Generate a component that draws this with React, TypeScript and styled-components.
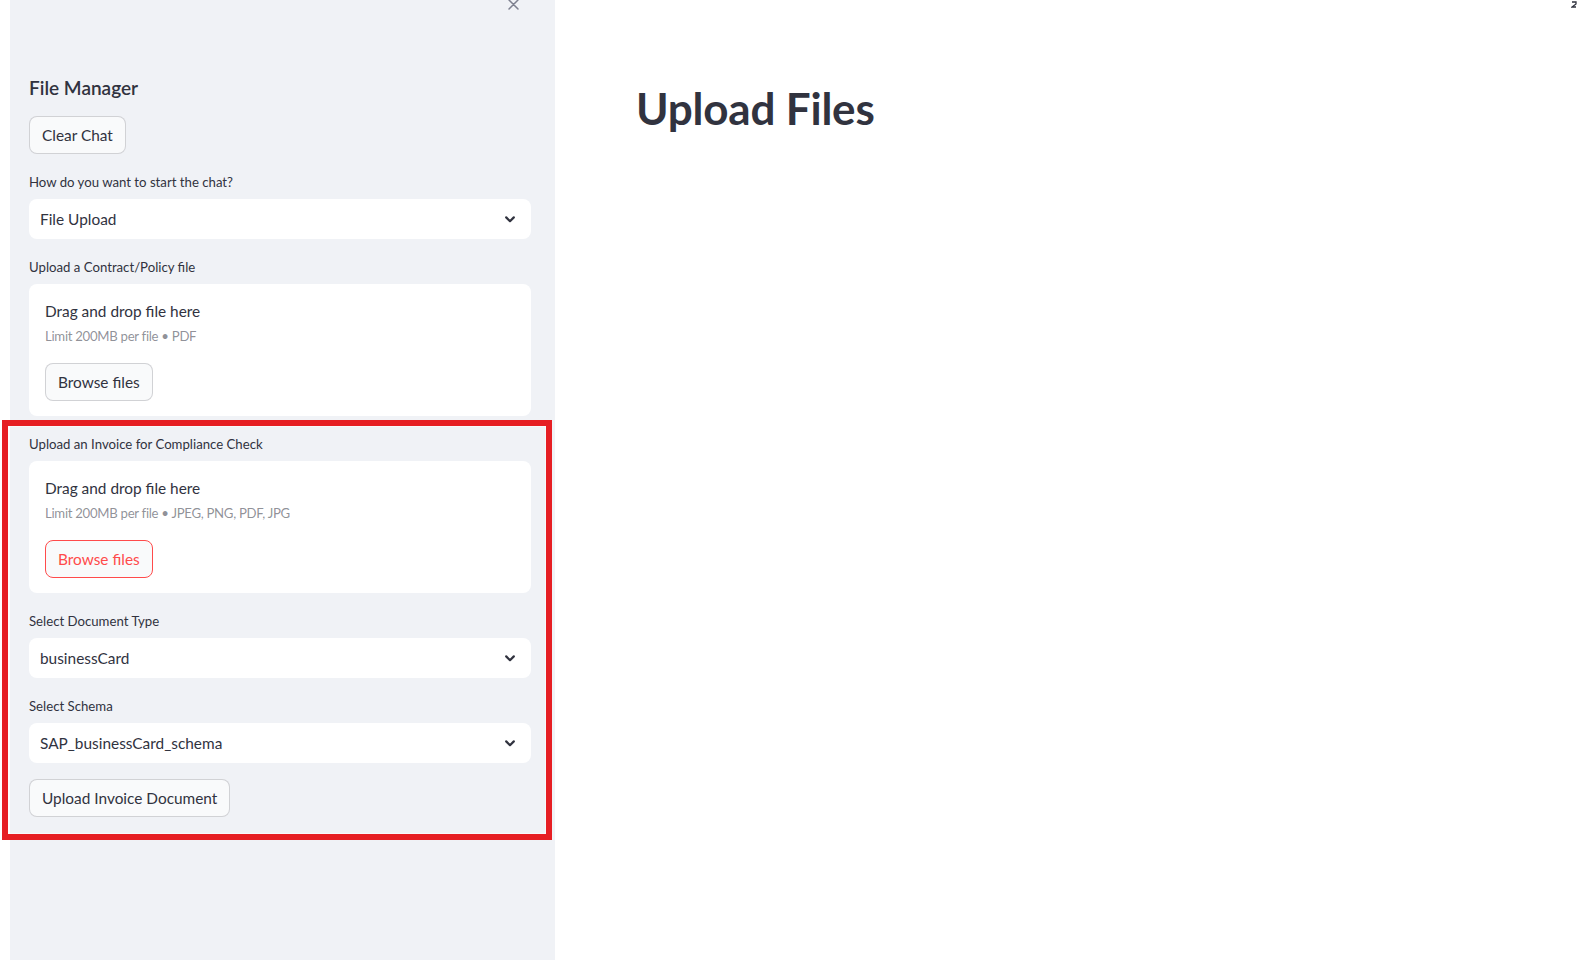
import React from "react";
import styled, { createGlobalStyle } from "styled-components";

const GlobalStyle = createGlobalStyle`
  html, body {
    margin: 0;
    padding: 0;
    background: #ffffff;
    font-family: "Source Sans Pro", Lato, "Noto Sans", sans-serif;
    color: #31333f;
  }
  * { box-sizing: border-box; }
`;

const Page = styled.div`
  display: flex;
  width: 1580px;
  height: 960px;
  overflow: hidden;
  position: relative;
  padding-left: 10px;
`;

const Sidebar = styled.aside`
  width: 545px;
  flex: none;
  height: 960px;
  background: #f0f2f6;
  padding: 0 24px 0 19px;
  display: flex;
  flex-direction: column;
`;

const SidebarHeader = styled.div`
  display: flex;
  justify-content: flex-end;
  align-items: center;
  height: 24px;
  margin-top: -8px;
  margin-right: 6px;
  margin-bottom: 60px;
`;

const CloseButton = styled.button`
  border: none;
  background: transparent;
  padding: 0;
  width: 24px;
  height: 24px;
  display: flex;
  align-items: center;
  justify-content: center;
`;

const Stack = styled.div`
  display: flex;
  flex-direction: column;
  gap: 16px;
  align-items: stretch;
`;

const SidebarTitle = styled.h3`
  margin: 0;
  font-size: 19px;
  line-height: 24px;
  font-weight: 600;
  color: #31333f;
`;

const Button = styled.button<{ $active?: boolean }>`
  align-self: flex-start;
  height: 38px;
  padding: 0 12px;
  border-radius: 8px;
  border: 1px solid ${(p) => (p.$active ? "#ff4b4b" : "rgba(49, 51, 63, 0.2)")};
  background: #f9fafb;
  color: ${(p) => (p.$active ? "#ff4b4b" : "#31333f")};
  font-family: inherit;
  font-size: 15.4px;
  line-height: 24px;
  white-space: nowrap;
`;

const Field = styled.div<{ $tight?: boolean }>`
  display: flex;
  flex-direction: column;
  margin-top: ${(p) => (p.$tight ? "0" : "0")};
`;

const Label = styled.label`
  font-size: 13.2px;
  line-height: 24px;
  min-height: 24px;
  margin-bottom: 5px;
  color: #31333f;
`;

const SelectBox = styled.div`
  height: 40px;
  background: #ffffff;
  border-radius: 8px;
  display: flex;
  align-items: center;
  justify-content: space-between;
  padding: 0 16px 0 11px;
  font-size: 15.4px;
  color: #31333f;
`;

const Dropzone = styled.div`
  background: #ffffff;
  border-radius: 8px;
  padding: 16px 16px 15px 16px;
  display: flex;
  flex-direction: column;
  align-items: flex-start;
`;

const DropTitle = styled.div`
  font-size: 15.4px;
  line-height: 23px;
  color: #31333f;
`;

const DropHint = styled.div`
  font-size: 13.2px;
  letter-spacing: -0.3px;
  line-height: 26px;
  color: rgba(49, 51, 63, 0.55);
  margin-bottom: 14px;
`;

const Highlight = styled.section`
  margin: -12px -21px 0 -27px;
  border: 6px solid #e61e23;
  box-shadow: inset 0 0 0 1px rgba(255, 255, 255, 0.55);
  padding: 6px 15px 17px 21px;
  display: flex;
  flex-direction: column;
  gap: 16px;
`;

const Main = styled.main`
  flex: 1;
  padding: 78px 80px 0 81px;
`;

const Heading = styled.h1`
  margin: 0;
  font-size: 44px;
  line-height: 60px;
  font-weight: 700;
  color: #31333f;
  letter-spacing: -0.2px;
`;

const TopRightGlyph = styled.div`
  position: absolute;
  top: 1px;
  right: 3px;
  width: 6px;
  height: 8px;
  display: flex;

  svg {
    display: block;
  }
`;

const Chevron = () => (
  <svg width="10" height="7" viewBox="0 0 10 7" fill="none">
    <path d="M1.2 1.4 L5 5.2 L8.8 1.4" stroke="#31333f" strokeWidth="2.2" strokeLinecap="round" strokeLinejoin="round" />
  </svg>
);

const CloseIcon = () => (
  <svg width="11" height="11" viewBox="0 0 11 11" fill="none">
    <path d="M1 1 L10 10 M10 1 L1 10" stroke="#7d808f" strokeWidth="1.5" strokeLinecap="round" />
  </svg>
);

const Select = ({ value }: { value: string }) => (
  <SelectBox>
    <span>{value}</span>
    <Chevron />
  </SelectBox>
);

const Uploader = ({ hint, active }: { hint: string; active?: boolean }) => (
  <Dropzone>
    <DropTitle>Drag and drop file here</DropTitle>
    <DropHint>{hint}</DropHint>
    <Button $active={active}>Browse files</Button>
  </Dropzone>
);

export default function App() {
  return (
    <>
      <GlobalStyle />
      <Page>
        <Sidebar>
          <SidebarHeader>
            <CloseButton aria-label="Close sidebar">
              <CloseIcon />
            </CloseButton>
          </SidebarHeader>
          <Stack>
            <SidebarTitle>File Manager</SidebarTitle>
            <Button>Clear Chat</Button>
            <Field>
              <Label>How do you want to start the chat?</Label>
              <Select value="File Upload" />
            </Field>
            <Field>
              <Label>Upload a Contract/Policy file</Label>
              <Uploader hint="Limit 200MB per file • PDF" />
            </Field>
            <Highlight>
              <Field>
                <Label>Upload an Invoice for Compliance Check</Label>
                <Uploader hint="Limit 200MB per file • JPEG, PNG, PDF, JPG" active />
              </Field>
              <Field>
                <Label>Select Document Type</Label>
                <Select value="businessCard" />
              </Field>
              <Field>
                <Label>Select Schema</Label>
                <Select value="SAP_businessCard_schema" />
              </Field>
              <Button>Upload Invoice Document</Button>
            </Highlight>
          </Stack>
        </Sidebar>
        <Main>
          <Heading>Upload Files</Heading>
        </Main>
        <TopRightGlyph>
          <svg width="6" height="8" viewBox="0 0 6 8" fill="none">
            <path d="M1 1 L5 1 L5 3 L1 6 L5 6" stroke="#31333f" strokeWidth="1.3" />
          </svg>
        </TopRightGlyph>
      </Page>
    </>
  );
}
